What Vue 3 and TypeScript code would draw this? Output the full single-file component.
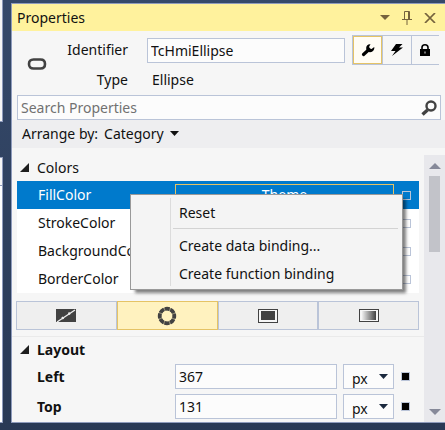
<script setup lang="ts">
import { ref } from 'vue'

interface LayoutField {
  id: string
  label: string
  value: string
}

const identifier = ref('TcHmiEllipse')
const search = ref('')
const arrangeOptions: string[] = ['Category', 'Name']
const colorRows: string[] = ['FillColor', 'StrokeColor', 'BackgroundColor', 'BorderColor']
const selectedRow = ref('FillColor')
const brushModes: string[] = ['none', 'theme', 'solid', 'gradient']
const activeMode = ref('theme')
const layoutFields = ref<LayoutField[]>([
  { id: 'left', label: 'Left', value: '367' },
  { id: 'top', label: 'Top', value: '131' },
])
</script>

<template>
  <div class="workspace">
    <div class="neighbour" aria-hidden="true">
      <div class="dock dock-upper"></div>
      <div class="dock dock-lower"><div class="dock-tab"></div></div>
    </div>

    <section class="panel">
      <header class="title">
        <h1>Properties</h1>
        <button type="button" aria-label="Window position">
          <svg width="10" height="6" viewBox="0 0 10 6"><path d="M0 0h10L5 5z" fill="#75633d" /></svg>
        </button>
        <button type="button" aria-label="Auto hide">
          <svg width="10" height="14" viewBox="0 0 10 14" fill="none" stroke="#75633d">
            <path d="M2.5 8V.5h5V8M0 8.5h10M5 9v5" />
            <path d="M6.500 1v7" />
          </svg>
        </button>
        <button type="button" aria-label="Close">
          <svg width="12" height="10" viewBox="0 0 12 10"><path d="M1 0l10 10M11 0L1 10" stroke="#75633d" stroke-width="1.700" /></svg>
        </button>
      </header>

      <div class="summary">
        <svg class="kind" width="20" height="14" viewBox="0 0 20 14">
          <path
            d="M6.500 1.500h7C16.500 1.500 18 3.200 18 6s-1.500 4.500-4.500 4.500h-7C3.500 10.500 2 8.800 2 6s1.500-4.500 4.500-4.500z"
            fill="none"
            stroke="#424242"
            stroke-width="2.600"
          />
        </svg>
        <label class="caption" for="identifier">Identifier</label>
        <input id="identifier" v-model="identifier" class="field" type="text" />
        <div class="modes">
          <button type="button" class="active" aria-label="Properties">
            <svg width="14" height="14" viewBox="0 0 14 14">
              <path d="M2.500 11.500L8 6.500" stroke="#000" stroke-width="3.200" stroke-linecap="round" />
              <path d="M9.500 1.200A4 4 0 0 0 5.200 4.800 4 4 0 0 0 9.200 9.200 4.200 4.200 0 0 0 13.200 4L10.600 6 8.500 5.600 8.200 3.600z" fill="#000" />
            </svg>
          </button>
          <button type="button" aria-label="Events">
            <svg width="12" height="12" viewBox="0 0 12 12"><path d="M5 0h6.500L8 3.500H12L1 12 4.500 7H0z" fill="#000" /></svg>
          </button>
          <button type="button" aria-label="Permissions">
            <svg width="10" height="12" viewBox="0 0 10 12">
              <path d="M2 6V3.500a3 2.700 0 0 1 6 0V6" fill="none" stroke="#000" stroke-width="1.600" />
              <path d="M0 5h10v7H0z" fill="#000" />
              <path d="M4.500 7.500h1v2h-1z" fill="#ddd" />
            </svg>
          </button>
        </div>
        <span class="caption type">Type</span>
        <span class="value">Ellipse</span>
      </div>

      <div class="search">
        <input v-model="search" type="text" placeholder="Search Properties" aria-label="Search Properties" />
        <svg width="16" height="16" viewBox="0 0 16 16" fill="none" stroke="#424242">
          <circle cx="10" cy="6" r="4.500" stroke-width="2.400" />
          <path d="M6.500 10L1.500 14.500" stroke-width="3.400" />
        </svg>
      </div>

      <div class="arrange">
        <label for="arrange">Arrange by:</label>
        <span class="arrange-pick">
          <select id="arrange">
            <option v-for="option in arrangeOptions" :key="option">{{ option }}</option>
          </select>
          <svg width="9" height="6" viewBox="0 0 9 6"><path d="M0 0h9L4.500 5z" fill="#111" /></svg>
        </span>
      </div>

      <div class="body">
        <div class="groups">
          <section class="group colors">
            <h2>
              <svg width="10" height="10" viewBox="0 0 10 10"><path d="M9 0v9H0z" fill="#1e1e1e" /></svg>
              Colors
            </h2>
            <div class="list">
              <div
                v-for="row in colorRows"
                :key="row"
                class="color-row"
                :class="{ selected: row === selectedRow }"
                @click="selectedRow = row"
              >
                <span class="name">{{ row }}</span>
                <button v-if="row === selectedRow" type="button" class="swatch">Theme</button>
                <span class="marker"></span>
              </div>
              <div class="menu" role="menu">
                <button type="button" role="menuitem">Reset</button>
                <hr />
                <button type="button" role="menuitem">Create data binding...</button>
                <button type="button" role="menuitem">Create function binding</button>
              </div>
            </div>
            <div class="brushes">
              <button
                v-for="mode in brushModes"
                :key="mode"
                type="button"
                :class="{ active: mode === activeMode }"
                :aria-label="mode"
                @click="activeMode = mode"
              >
                <svg v-if="mode === 'none'" width="20" height="14" viewBox="0 0 20 14">
                  <path d="M0 0h20v13H0z" fill="#424242" />
                  <path d="M1 13L19 1" stroke="#efefef" stroke-width="1.300" />
                  <path d="M6 9.500l1.500-1M12.500 5l1.500-1" stroke="#efefef" stroke-width="2.400" />
                </svg>
                <svg v-else-if="mode === 'theme'" width="20" height="20" viewBox="0 0 20 20">
                  <circle cx="10" cy="10" r="7.300" fill="none" stroke="#8f8a74" stroke-width="3" />
                  <circle cx="10" cy="10" r="7.300" fill="none" stroke="#424242" stroke-width="3.800" stroke-dasharray="4.600 1.133" stroke-dashoffset="2.300" />
                </svg>
                <svg v-else-if="mode === 'solid'" width="20" height="14" viewBox="0 0 20 14">
                  <rect x=".5" y=".5" width="19" height="13" fill="#f6f6f6" stroke="#424242" />
                  <path d="M3 2h14v9H3zM0 13h20v1H0z" fill="#424242" />
                </svg>
                <svg v-else width="20" height="14" viewBox="0 0 20 14">
                  <defs>
                    <linearGradient id="fade">
                      <stop offset="0" stop-color="#efefef" />
                      <stop offset="1" stop-color="#424242" />
                    </linearGradient>
                  </defs>
                  <rect x=".5" y=".5" width="19" height="12" fill="#f6f6f6" stroke="#424242" />
                  <path d="M3 2h14v9H3z" fill="url(#fade)" />
                </svg>
              </button>
            </div>
          </section>

          <section class="group layout">
            <h2>
              <svg width="10" height="10" viewBox="0 0 10 10"><path d="M9 0v9H0z" fill="#1e1e1e" /></svg>
              Layout
            </h2>
            <div v-for="field in layoutFields" :key="field.id" class="layout-row">
              <label :for="field.id">{{ field.label }}</label>
              <input :id="field.id" v-model="field.value" class="field" type="text" />
              <span class="unit">
                <select :aria-label="field.label + ' unit'">
                  <option>px</option>
                  <option>%</option>
                </select>
                <svg width="9" height="6" viewBox="0 0 9 6"><path d="M0 0h9L4.500 5z" fill="#1b293e" /></svg>
              </span>
              <span class="marker filled"></span>
            </div>
          </section>
        </div>

        <div class="scrollbar" aria-hidden="true">
          <svg width="12" height="6" viewBox="0 0 12 6"><path d="M0 6L6 0l6 6z" fill="#868999" /></svg>
          <div class="track"><div class="thumb"></div></div>
          <svg width="12" height="6" viewBox="0 0 12 6"><path d="M0 0l6 6 6-6z" fill="#868999" /></svg>
        </div>
      </div>
    </section>
  </div>
</template>

<style>
body {
  margin: 0;
  background: #293955;
}
</style>

<style scoped>
* {
  box-sizing: border-box;
}
.workspace {
  display: flex;
  gap: 8px;
  min-height: 100vh;
  padding-bottom: 7px;
  background: linear-gradient(#35496a, #293955);
  color: #111;
  font: 14px/20px "Noto Sans", "Open Sans", sans-serif;
}
button,
input,
select {
  margin: 0;
  padding: 0;
  border: 0;
  border-radius: 0;
  background: none;
  color: inherit;
  font: inherit;
  outline: none;
  appearance: none;
}
svg {
  display: block;
  flex: none;
}
.neighbour {
  display: flex;
  flex: none;
  flex-direction: column;
  gap: 35px;
  width: 3px;
}
.dock {
  border: solid #8e9bbc;
  border-width: 0 1px 1px 0;
  background: #f6f6f6;
}
.dock-upper {
  height: 122px;
}
.dock-lower {
  flex: 1;
  border-top-width: 1px;
  background: #fff;
}
.dock-tab {
  height: 28px;
  border-bottom: 1px solid #8e9bbc;
  background: #f6f6f6;
}
.panel {
  display: flex;
  flex: 1;
  flex-direction: column;
  min-width: 0;
  margin-top: 3px;
  border: solid #8e9bbc;
  border-width: 1px 0 1px 1px;
  background: #f6f6f6;
}
.title {
  display: flex;
  align-items: center;
  gap: 12px;
  height: 27px;
  padding: 0 9px 0 5px;
  background: #fff29d;
}
h1,
h2 {
  margin: 0;
  font: inherit;
}
h1 {
  flex: 1;
}
.summary {
  display: grid;
  grid-template-columns: 20px 81px minmax(0, 1fr) 87px;
  grid-template-rows: 30px 29px;
  align-items: center;
  padding: 4px 6px 1px 15px;
}
.kind {
  grid-row: 1 / 3;
}
.caption {
  text-align: right;
}
.type {
  grid-column: 2;
}
.field {
  min-width: 0;
  height: 25px;
  padding: 0 3px;
  border: 1px solid #bac4d8;
  background: #fcfcfc;
}
.summary .field {
  margin: 0 7px 0 19px;
}
.value {
  padding-left: 24px;
}
.modes {
  display: flex;
  height: 30px;
  border: solid #bac4d8;
  border-width: 1px 0 1px 1px;
}
.modes button {
  display: grid;
  flex: 1;
  place-items: center;
}
.modes button + button {
  border-left: 1px solid #bac4d8;
}
.modes .active {
  border: 1px solid #e5c365;
  background: #fffcf4;
}
.search {
  display: flex;
  align-items: center;
  height: 25px;
  margin: 0 4px 0 5px;
  padding: 0 3px;
  border: 1px solid #bac4d8;
  background: #fcfcfc;
}
.search input {
  flex: 1;
  min-width: 0;
}
.search input::placeholder {
  color: #717171;
  opacity: 1;
}
.arrange {
  display: flex;
  align-items: center;
  gap: 6px;
  height: 28px;
  padding-left: 10px;
  background: #eeeef0;
}
.arrange-pick {
  display: flex;
  align-items: center;
  gap: 6px;
}
.body {
  display: flex;
  flex: 1;
}
.groups {
  flex: 1;
  min-width: 0;
}
h2 {
  display: flex;
  align-items: center;
  gap: 7px;
  height: 26px;
  padding-left: 8px;
}
.colors {
  padding: 7px 5px 6px 4px;
}
.colors h2 {
  padding-left: 4px;
}
.list {
  position: relative;
  margin-left: 1px;
  background: #fff;
}
.color-row {
  display: flex;
  align-items: center;
  height: 28px;
  padding: 0 8px 0 21px;
}
.color-row .name {
  flex: none;
  width: 137px;
}
.selected {
  background: #007acc;
  color: #fff;
}
.swatch {
  flex: 1;
  height: 22px;
  border: 1px solid #e5c365;
}
.marker {
  flex: none;
  width: 9px;
  height: 9px;
  margin-left: auto;
  border: 1px solid #bac4d8;
}
.swatch + .marker {
  margin-left: 8px;
}
.menu {
  position: absolute;
  top: 13px;
  left: 113px;
  display: flex;
  flex-direction: column;
  width: 273px;
  padding: 4px 4px 1px;
  border: 1px solid #999;
  background: linear-gradient(#dcdcdc, #dcdcdc) 39px 3px / 1px 88px no-repeat #f4f4f4;
  box-shadow: 4px 4px 3px -1px rgba(0, 0, 0, 0.5);
}
.menu button {
  height: 28px;
  padding-left: 44px;
  text-align: left;
}
.menu hr {
  width: 225px;
  height: 1px;
  margin: 1px 0 3px 38px;
  border: 0;
  background: #d3d3d3;
}
.brushes {
  display: flex;
  height: 29px;
  margin-top: 8px;
}
.brushes button {
  display: grid;
  flex: 1;
  place-items: center;
  border: 1px solid #bac4d8;
  background: #efefef;
}
.brushes .active {
  border-color: #e5c365;
  background: #fff2bf;
}
.layout {
  border-top: 1px solid #eaeaea;
  font-weight: 700;
}
.layout-row {
  display: flex;
  align-items: center;
  height: 25px;
  margin-top: 1px;
  padding: 0 14px 0 25px;
}
.layout-row + .layout-row {
  margin-top: 5px;
}
.layout-row label {
  flex: none;
  width: 138px;
}
.layout-row .field,
.unit {
  font-weight: 400;
}
.layout-row .field {
  flex: 1;
}
.unit {
  display: flex;
  align-items: center;
  width: 51px;
  height: 25px;
  margin: 0 7px 0 6px;
  padding-right: 5px;
  border: 1px solid #bac4d8;
  background: #fcfcfc;
}
.unit select {
  flex: 1;
  height: 23px;
  padding: 4px 0 0 8px;
}
.filled {
  margin: 0;
  background: #000;
}
.scrollbar {
  display: flex;
  flex-direction: column;
  align-items: center;
  width: 21px;
  margin-top: 7px;
  padding: 8px 0 7px;
  background: #e8e8ec;
}
.track {
  flex: 1;
  width: 11px;
  padding: 7px 0;
}
.thumb {
  height: 76px;
  background: #c2c3c9;
}
</style>
